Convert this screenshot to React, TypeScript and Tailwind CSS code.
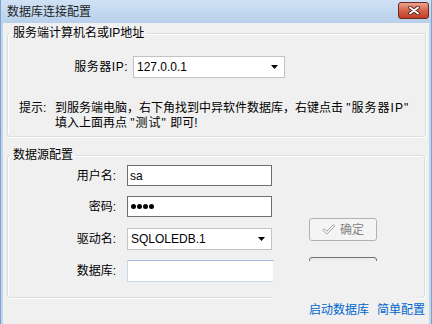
import React from "react"

function Arrow() {
  return (
    <svg width="7" height="4" viewBox="0 0 7 4">
      <path d="M0 0h7L3.5 4z" fill="#000" />
    </svg>
  )
}

function Combo({ value, className }: { value: string; className: string }) {
  return (
    <div
      className={`flex items-center justify-between h-[22px] bg-white border border-[#c3c3c3] pl-[3px] pr-[6px] ${className}`}
    >
      <span className="leading-[16px]">{value}</span>
      <Arrow />
    </div>
  )
}

function Row({ label, children }: { label: string; children: React.ReactNode }) {
  return (
    <div className="flex items-center">
      <span className="w-[108px] text-right leading-[16px]">{label}</span>
      <div className="ml-[11px]">{children}</div>
    </div>
  )
}

export default function App() {
  return (
    <div className="relative w-[432px] h-[324px] overflow-hidden flex flex-col bg-[#c2d6ee] border-l border-r border-[#7fa2cc] text-[12px] text-black font-['Liberation_Sans','Noto_Sans_CJK_SC',sans-serif]">
      {/* title bar */}
      <div className="h-[23px] shrink-0 flex items-center justify-between pl-[6px] pr-[2px] bg-gradient-to-b from-[#d0e1f5] to-[#b8d0eb]">
        <span className="leading-[16px] text-[#1e1e1e]">数据库连接配置</span>
        <div className="w-[31px] h-[17px] mb-[3px] rounded-[3px] border border-[#6b2a1c] bg-gradient-to-b from-[#eba28e] via-[#d5644a] to-[#c23e24] flex items-center justify-center">
          <svg width="12" height="9" viewBox="0 0 12 9">
            <path d="M2 1.5l8 6M10 1.5l-8 6" stroke="#4a2018" strokeWidth="3.6" strokeLinecap="round" />
            <path d="M2 1.5l8 6M10 1.5l-8 6" stroke="#fff" strokeWidth="2" strokeLinecap="round" />
          </svg>
        </div>
      </div>

      {/* body */}
      <div className="flex-1 mx-[2px] bg-[#f0f0f0] flex flex-col">
        <fieldset className="mt-[2px] ml-[4px] w-[419px] border border-[#d5dfe5] rounded-[3px] pb-[5px] shadow-[inset_1px_1px_0_#fff,1px_1px_0_#fff]">
          <legend className="ml-[2px] px-[3px] leading-[17px]">服务端计算机名或IP地址</legend>
          <div className="mt-[14px] flex items-center">
            <span className="w-[120px] text-right leading-[16px] tracking-[0.5px]">服务器IP:</span>
            <Combo value="127.0.0.1" className="ml-[5px] w-[152px]" />
          </div>
          <div className="mt-[23px] pl-[11px] flex leading-[15px]">
            <span className="w-[36px] shrink-0">提示:</span>
            <div>
              <div>
                到服务端电脑，右下角找到中异软件数据库，右键点击 <span className="tracking-[1px]">"服务器IP"</span>
              </div>
              <div>
                填入上面再点 <span className="tracking-[1px]">"测试"</span> 即可!
              </div>
            </div>
          </div>
        </fieldset>

        <fieldset className="mt-[10px] ml-[4px] w-[418px] border border-[#d5dfe5] rounded-[3px] pb-[15px] shadow-[inset_1px_1px_0_#fff,1px_1px_0_#fff]">
          <legend className="ml-[2px] px-[3px] leading-[17px]">数据源配置</legend>
          <div className="flex">
            <div className="mt-[1px] flex flex-col">
              <Row label="用户名:">
                <div className="w-[145px] h-[21px] bg-white border border-[#6e6e6e] pl-[2px] flex items-center leading-[16px]">
                  sa
                </div>
              </Row>
              <div className="mt-[10px]">
                <Row label="密码:">
                  <div className="w-[145px] h-[21px] bg-white border border-[#6e6e6e] pl-[3px] flex items-center gap-[1px]">
                    {[0, 1, 2, 3].map((i) => (
                      <span key={i} className="w-[5px] h-[5px] rounded-full bg-black" />
                    ))}
                  </div>
                </Row>
              </div>
              <div className="mt-[11px]">
                <Row label="驱动名:">
                  <Combo value="SQLOLEDB.1" className="w-[145px]" />
                </Row>
              </div>
              <div className="mt-[10px]">
                <Row label="数据库:">
                  <div className="w-[147px] h-[22px] bg-white border border-[#c5d9ef] border-t-[#9fbde2]" />
                </Row>
              </div>
            </div>

            <div className="ml-[35px] mt-[54px] flex flex-col">
              <div className="w-[68px] h-[23px] rounded-[3px] border border-[#adb2b5] bg-[#f4f4f4] flex items-center justify-center gap-[4px] text-[#838383]">
                <svg width="14" height="11" viewBox="0 0 14 11">
                  <path
                    d="M0.8 6.2L2.3 4.7L4.8 7.2L11.5 0.5L13 2L4.8 10.2Z"
                    fill="none"
                    stroke="#a6a6a6"
                    strokeWidth="1"
                    strokeLinejoin="round"
                  />
                </svg>
                <span className="leading-[16px]">确定</span>
              </div>
              <div className="mt-[16px] w-[68px] h-[23px] rounded-[3px] border border-[#707070] bg-[#ececec]" />
            </div>
          </div>
        </fieldset>

        <div className="mt-[4px] pr-[4px] flex justify-end gap-[8px] leading-[16px] text-[#0066cc]">
          <span>启动数据库</span>
          <span>简单配置</span>
        </div>
      </div>

      {/* panel lying over the lower right part of the group */}
      <div className="absolute left-[272px] top-[261px] w-[143px] h-[40px] bg-[#f0f0f0]" />
    </div>
  )
}
